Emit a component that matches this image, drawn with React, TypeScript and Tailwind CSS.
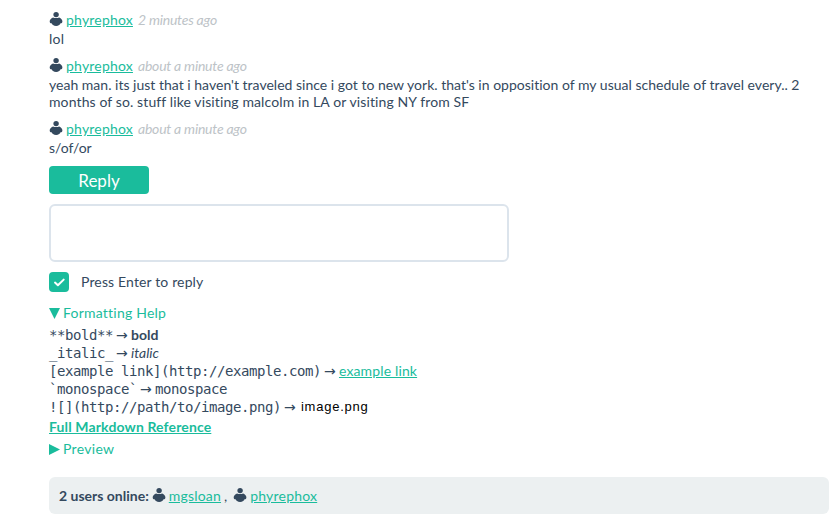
import type { ReactNode } from 'react';

function UserIcon() {
  return (
    <svg className="mr-[3px] h-4 w-[14px] shrink-0" viewBox="0 0 14 16" fill="#34495e">
      <ellipse cx="7.1" cy="2.6" rx="2.7" ry="2.6" />
      <path d="M4 5.4Q7.1 6.6 10.2 5.4C12.2 6 13.4 7.8 13.4 9.4C13.4 10.7 12.6 11.3 11.5 11.3C11.2 12.8 9.6 13.9 7.1 13.9C4.6 13.9 3 12.8 2.6 11.3C1.4 11.3 .7 10.7 .7 9.4C.7 7.8 2 6 4 5.4Z" />
    </svg>
  );
}

function User({ name }: { name: string }) {
  return (
    <span className="flex items-center">
      <UserIcon />
      <a className="tracking-[0.2px] text-[#1abc9c] underline">{name}</a>
    </span>
  );
}

function Message({ time, children }: { time: string; children: ReactNode }) {
  return (
    <article>
      <header className="flex h-5 items-center">
        <User name="phyrephox" />
        <span className="ml-[5px] tracking-[-0.22px] text-[#bdc3c7] italic">{time}</span>
      </header>
      <p className="leading-[17px]">{children}</p>
    </article>
  );
}

function Example({ code, children }: { code: string; children: ReactNode }) {
  return (
    <div className="flex h-[18px] items-center">
      <code className="font-['DejaVu_Sans_Mono',monospace] text-[14px] tracking-[-0.43px]">{code}</code>
      <span className="mx-[3px] w-3 font-['DejaVu_Sans',sans-serif] text-[14px]">→</span>
      {children}
    </div>
  );
}

export default function App() {
  return (
    <main className="h-[527px] w-[840px] overflow-hidden bg-white pt-[10px] pr-[11px] pl-[49px] font-['Lato',sans-serif] text-[14px] leading-[18px] text-[#34495e] [font-variant-ligatures:none]">
      <section className="flex flex-col gap-[9px]">
        <Message time="2 minutes ago"><span className="tracking-[0.2px]">lol</span></Message>
        <Message time="about a minute ago">
          <span className="tracking-[0.01px]">yeah man. its just that i haven't traveled since i got to new york. that's in opposition of my usual schedule of travel every.. 2</span><br />
          <span className="tracking-[0.11px]">months of so. stuff like visiting malcolm in LA or visiting NY from SF</span>
        </Message>
        <Message time="about a minute ago">s/of/or</Message>
      </section>
      <button className="mt-[10px] block h-7 w-[100px] rounded bg-[#1abc9c] pt-px text-[17px] leading-7 text-white">Reply</button>
      <textarea className="mt-[10px] block h-[58px] w-[460px] resize-none rounded-md border-2 border-[#dce4ec] bg-white" />
      <label className="mt-[10px] flex h-5 items-center tracking-[0.14px]">
        <span className="mr-3 flex h-5 w-5 items-center justify-center rounded bg-[#1abc9c]">
          <svg className="h-5 w-5" viewBox="0 0 20 20" fill="none" stroke="white" strokeWidth="2" strokeLinecap="round" strokeLinejoin="round">
            <path d="M6 10.6L8.9 13.3L14.7 7.6" />
          </svg>
        </span>
        Press Enter to reply
      </label>
      <div className="mt-3 flex h-[18px] items-center text-[#1abc9c]">
        <svg className="mr-[3px] h-[11px] w-[11px]" viewBox="0 0 11 11" fill="currentColor"><path d="M0 0H11L5.5 11Z" /></svg>
        <span className="tracking-[0.22px]">Formatting Help</span>
      </div>
      <div className="mt-1">
        <Example code="**bold**"><b>bold</b></Example>
        <Example code="_italic_"><i>italic</i></Example>
        <Example code="[example link](http://example.com)"><a className="tracking-[0.14px] text-[#1abc9c] underline">example link</a></Example>
        <Example code="`monospace`"><code className="font-['DejaVu_Sans_Mono',monospace] text-[14px] tracking-[-0.43px]">monospace</code></Example>
        <Example code="![](http://path/to/image.png)"><span className="ml-[2px] font-['Liberation_Sans',sans-serif] text-[13px] tracking-[0.75px] text-black">image.png</span></Example>
      </div>
      <a className="mt-px block h-5 leading-5 font-bold tracking-[0.13px] text-[#1abc9c] underline">Full Markdown Reference</a>
      <div className="mt-[3px] flex h-[18px] items-center text-[#1abc9c]">
        <svg className="mr-[3px] h-[11px] w-[11px]" viewBox="0 0 11 11" fill="currentColor"><path d="M0 0V11L11 5.5Z" /></svg>
        <span className="tracking-[0.3px]">Preview</span>
      </div>
      <footer className="mt-[19px] flex h-[37px] items-center rounded-md bg-[#ecf0f1] px-[10px]">
        <b className="mr-[3px]">2 users online:</b>
        <User name="mgsloan" />
        <span className="mr-[6px] ml-[3px]">,</span>
        <User name="phyrephox" />
      </footer>
    </main>
  );
}
